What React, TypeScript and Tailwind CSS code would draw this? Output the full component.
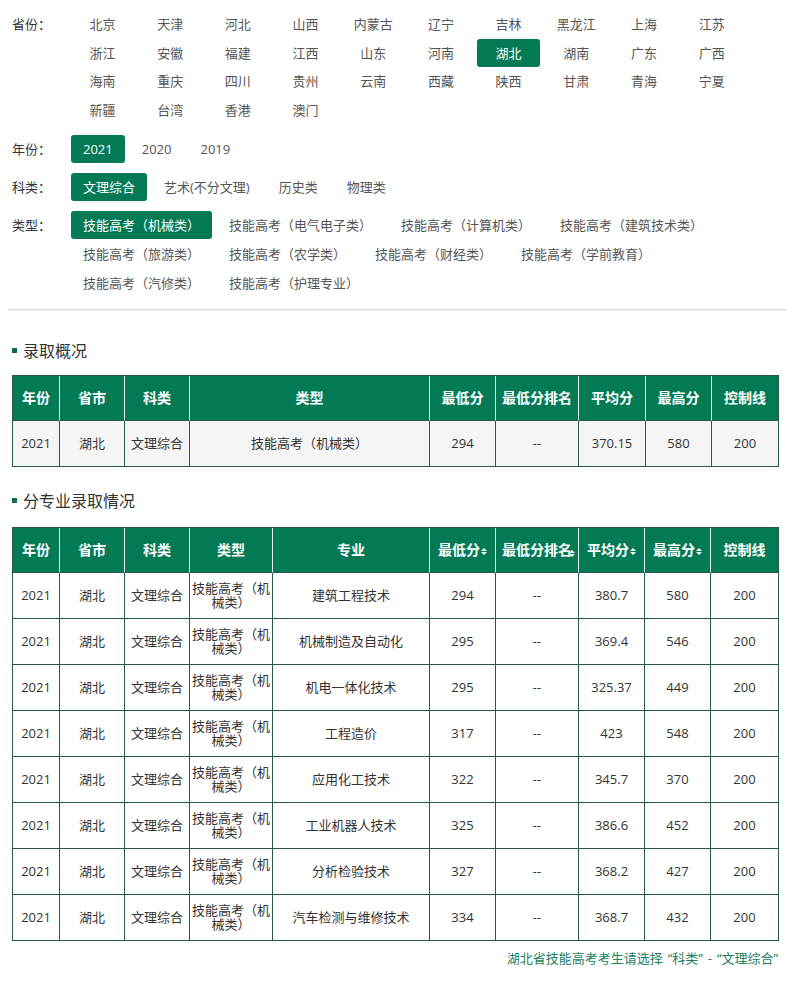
import React from "react";

const provinces = [
  "北京","天津","河北","山西","内蒙古","辽宁","吉林","黑龙江","上海","江苏",
  "浙江","安徽","福建","江西","山东","河南","湖北","湖南","广东","广西",
  "海南","重庆","四川","贵州","云南","西藏","陕西","甘肃","青海","宁夏",
  "新疆","台湾","香港","澳门",
];

const types = [
  ["技能高考（机械类）", "技能高考（电气电子类）", "技能高考（计算机类）", "技能高考（建筑技术类）"],
  ["技能高考（旅游类）", "技能高考（农学类）", "技能高考（财经类）", "技能高考（学前教育）"],
  ["技能高考（汽修类）", "技能高考（护理专业）"],
];

const majors: [string, string, string, string][] = [
  ["建筑工程技术", "294", "380.7", "580"],
  ["机械制造及自动化", "295", "369.4", "546"],
  ["机电一体化技术", "295", "325.37", "449"],
  ["工程造价", "317", "423", "548"],
  ["应用化工技术", "322", "345.7", "370"],
  ["工业机器人技术", "325", "386.6", "452"],
  ["分析检验技术", "327", "368.2", "427"],
  ["汽车检测与维修技术", "334", "368.7", "432"],
];

function Opt({ label, active }: { label: string; active?: boolean }) {
  return (
    <span
      className={
        active
          ? "h-[28px] leading-[28px] px-[12px] rounded-[3px] bg-[#037a56] text-white whitespace-nowrap"
          : "h-[28px] leading-[28px] px-[12px] rounded-[3px] text-[#555] whitespace-nowrap"
      }
    >
      {label}
    </span>
  );
}

function Label({ text }: { text: string }) {
  return <div className="w-[59px] shrink-0 h-[28px] leading-[28px] text-[#333]">{text}</div>;
}

function SortIcon() {
  return (
    <svg width="6" height="9" viewBox="0 0 6 9" className="inline-block ml-[1px] align-middle" fill="#ffffff">
      <path d="M0 4 L3 1 L6 4 Z" />
      <path d="M0 5 L6 5 L3 8 Z" />
    </svg>
  );
}

function Title({ text }: { text: string }) {
  return (
    <div className="flex items-center h-[24px] pl-[12px]">
      <span className="w-[5px] h-[5px] bg-[#0d6b4e] mr-[6px]" />
      <span className="text-[16px] text-[#333]">{text}</span>
    </div>
  );
}

const th = "h-[45px] text-white text-[14px] font-bold bg-[#037a56] border-r border-b border-r-[#e8f3ee] border-b-[#24594b] text-center px-0 whitespace-nowrap";
const thLast = "h-[45px] text-white text-[14px] font-bold bg-[#037a56] border-r border-b border-[#24594b] text-center px-0 whitespace-nowrap";
const td = "h-[46px] text-[13px] text-[#333] border-r border-b border-[#24594b] text-center px-[2px]";

export default function App() {
  return (
    <div className="w-[794px] min-h-[996px] bg-white text-[13px] font-['Open_Sans','Noto_Sans_CJK_SC',sans-serif]">
      <div className="pl-[12px] pt-[10px]">
        <div className="flex">
          <Label text="省份：" />
          <div className="grid grid-cols-[repeat(10,63px)] gap-x-[4.7px] gap-y-[0.67px]">
            {provinces.map((p) => (
              <span
                key={p}
                className={
                  p === "湖北"
                    ? "h-[28px] leading-[28px] text-center rounded-[3px] bg-[#037a56] text-white"
                    : "h-[28px] leading-[28px] text-center text-[#555]"
                }
              >
                {p}
              </span>
            ))}
          </div>
        </div>
        <div className="flex mt-[11px]">
          <Label text="年份：" />
          <div className="flex gap-x-[5px]">
            <Opt label="2021" active />
            <Opt label="2020" />
            <Opt label="2019" />
          </div>
        </div>
        <div className="flex mt-[10px]">
          <Label text="科类：" />
          <div className="flex gap-x-[5px]">
            <Opt label="文理综合" active />
            <Opt label="艺术(不分文理)" />
            <Opt label="历史类" />
            <Opt label="物理类" />
          </div>
        </div>
        <div className="flex mt-[10px]">
          <Label text="类型：" />
          <div className="flex flex-col gap-y-[1px]">
            {types.map((row, i) => (
              <div key={i} className="flex gap-x-[5px]">
                {row.map((t) => (
                  <Opt key={t} label={t} active={t === "技能高考（机械类）"} />
                ))}
              </div>
            ))}
          </div>
        </div>
      </div>

      <div className="mx-[8px] mt-[12px] h-[1px] bg-[#d8d8d8]" />
      <div className="mx-[8px] h-[1px] bg-[#f0f0f0]" />

      <div className="mt-[28px]">
        <Title text="录取概况" />
      </div>
      <div className="pl-[12px] mt-[12px]">
        <table className="table-fixed w-[766px] border-separate border-spacing-0 border-l border-t border-[#24594b]">
          <colgroup>
            <col className="w-[47px]" />
            <col className="w-[65px]" />
            <col className="w-[65px]" />
            <col className="w-[240px]" />
            <col className="w-[66px]" />
            <col className="w-[83px]" />
            <col className="w-[67px]" />
            <col className="w-[66px]" />
            <col className="w-[67px]" />
          </colgroup>
          <thead>
            <tr>
              {["年份", "省市", "科类", "类型", "最低分", "最低分排名", "平均分", "最高分"].map((h) => (
                <th key={h} className={th}>{h}</th>
              ))}
              <th className={thLast}>控制线</th>
            </tr>
          </thead>
          <tbody>
            <tr className="bg-[#f5f5f5]">
              {["2021", "湖北", "文理综合", "技能高考（机械类）", "294", "--", "370.15", "580", "200"].map((c, i) => (
                <td key={i} className={td}>{c}</td>
              ))}
            </tr>
          </tbody>
        </table>
      </div>

      <div className="mt-[22px]">
        <Title text="分专业录取情况" />
      </div>
      <div className="pl-[12px] mt-[14px]">
        <table className="table-fixed w-[766px] border-separate border-spacing-0 border-l border-t border-[#24594b]">
          <colgroup>
            <col className="w-[47px]" />
            <col className="w-[65px]" />
            <col className="w-[65px]" />
            <col className="w-[83px]" />
            <col className="w-[157px]" />
            <col className="w-[66px]" />
            <col className="w-[83px]" />
            <col className="w-[66px]" />
            <col className="w-[66px]" />
            <col className="w-[68px]" />
          </colgroup>
          <thead>
            <tr>
              {["年份", "省市", "科类", "类型", "专业"].map((h) => (
                <th key={h} className={th}>{h}</th>
              ))}
              <th className={th}>最低分<SortIcon /></th>
              <th className={th}>
                <span className="relative">最低分排名<span className="absolute right-[-3px] top-[1px]"><SortIcon /></span></span>
              </th>
              <th className={th}>平均分<SortIcon /></th>
              <th className={th}>最高分<SortIcon /></th>
              <th className={thLast}>控制线</th>
            </tr>
          </thead>
          <tbody>
            {majors.map(([m, lo, avg, hi]) => (
              <tr key={m}>
                <td className={td}>2021</td>
                <td className={td}>湖北</td>
                <td className={td}>文理综合</td>
                <td className={td + " leading-[14px]"}>技能高考（机械类）</td>
                <td className={td}>{m}</td>
                <td className={td}>{lo}</td>
                <td className={td}>--</td>
                <td className={td}>{avg}</td>
                <td className={td}>{hi}</td>
                <td className={td}>200</td>
              </tr>
            ))}
          </tbody>
        </table>
      </div>
      <div className="w-[778px] mt-[7px] text-right text-[13px] leading-[20px] text-[#23805f]">
        湖北省技能高考考生请选择<span className="ml-[5px]">“</span>科类”<span className="mx-[5px]">-</span>“文理综合”
      </div>
    </div>
  );
}
